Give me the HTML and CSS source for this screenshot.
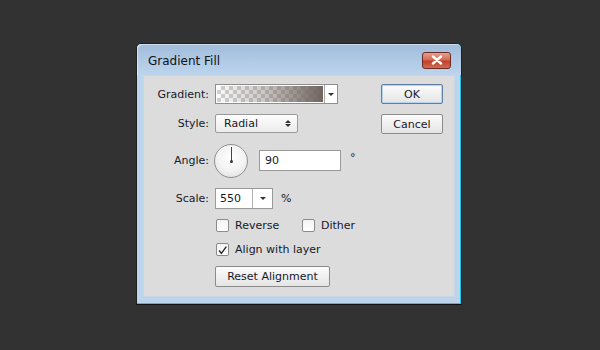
FILE: index.html
```html
<!DOCTYPE html>
<html>
<head>
<meta charset="utf-8">
<link rel="stylesheet" href="styles.css">
</head>
<body>
<div class="dialog">
  <div class="titlebar">
    <span class="title">Gradient Fill</span>
    <span class="close">
      <svg width="14" height="10" viewBox="0 0 14 10"><path d="M3 1.5 L11 8.5 M11 1.5 L3 8.5" stroke="#fff" stroke-width="2.4" stroke-linecap="round"/></svg>
    </span>
  </div>
  <div class="content">
    <div class="form">
      <div class="label r1">Gradient:</div>
      <div class="ctrl r1">
        <div class="grad"><div class="swatch"></div><div class="dd"><span class="tri"></span></div></div>
      </div>
      <div class="label r2">Style:</div>
      <div class="ctrl r2">
        <div class="select"><span>Radial</span><span class="updown"><span class="up"></span><span class="down"></span></span></div>
      </div>
      <div class="label r3">Angle:</div>
      <div class="ctrl r3">
        <div class="dial"><span class="hand"></span><span class="dot"></span></div>
        <div class="input angle">90</div>
        <span class="unit deg">°</span>
      </div>
      <div class="label r4">Scale:</div>
      <div class="ctrl r4">
        <div class="combo"><span class="val">550</span><span class="dd"><span class="tri"></span></span></div>
        <span class="unit">%</span>
      </div>
      <div class="ctrl r5">
        <label class="check rev"><span class="box"></span>Reverse</label>
        <label class="check"><span class="box"></span>Dither</label>
      </div>
      <div class="ctrl r6">
        <label class="check"><span class="box"><svg width="13" height="13" viewBox="0 0 13 13"><path d="M2.5 6.5 L5.2 10 L11 2" fill="none" stroke="#222" stroke-width="1.6"/></svg></span>Align with layer</label>
      </div>
      <div class="ctrl r7">
        <div class="btn reset">Reset Alignment</div>
      </div>
    </div>
    <div class="buttons">
      <div class="btn ok">OK</div>
      <div class="btn">Cancel</div>
    </div>
  </div>
</div>
</body>
</html>
```

FILE: styles.css
```css
html, body {
  margin: 0;
  padding: 0;
  background: #323232;
  width: 600px;
  height: 350px;
  overflow: hidden;
}
body {
  padding: 43px 0 0 136px;
  box-sizing: border-box;
  font-family: Tahoma, "DejaVu Sans", sans-serif;
  font-size: 11px;
  color: #16182a;
}
.dialog {
  width: 326px;
  height: 262px;
  box-sizing: border-box;
  border: 1px solid #202020;
  border-bottom-color: #111;
  background: #bcd4ec;
  border-radius: 5px 5px 0 0;
  display: flex;
  flex-direction: column;
  padding: 0 6px 7px 6px;
  box-shadow: inset 0 -1px 0 #23c8ec, inset -1px 0 0 #23c8ec;
}
.titlebar {
  height: 31px;
  margin: 0 -6px;
  padding: 0 9px 0 11px;
  display: flex;
  align-items: center;
  justify-content: space-between;
  background: linear-gradient(#a0bcda, #b2cbe7 60%, #bcd4ec);
  border-radius: 5px 5px 0 0;
  box-shadow: inset 1px 1px 0 rgba(255,255,255,0.5);
}
.title {
  font-size: 12px;
  color: #111;
  padding-top: 2px;
}
.close {
  width: 27px;
  height: 15px;
  border: 1px solid #6b2a22;
  border-radius: 3px;
  background: linear-gradient(#e6a08f, #d66b55 45%, #c2402c 55%, #cf6d55);
  display: flex;
  align-items: center;
  justify-content: center;
  margin-top: 1px;
  margin-right: 1px;
}
.content {
  flex: 1;
  background: #dcdcdc;
  border: 1px solid #c8d6e6;
  display: flex;
  justify-content: space-between;
  padding: 8px 11px 0 0;
}
.form {
  display: grid;
  grid-template-columns: 65px auto;
  grid-template-rows: 20px 19px 35px 20px 14px 14px 21px;
  row-gap: 10px;
  column-gap: 6px;
  align-items: center;
  align-content: start;
}
.r5, .r6 { margin-top: 1px; }
.label {
  text-align: right;
}
.ctrl {
  display: flex;
  align-items: center;
  grid-column: 2;
}
.grad {
  display: flex;
  width: 123px;
  height: 20px;
  box-sizing: border-box;
  border: 1px solid #8e8e8e;
  background: #fff;
}
.swatch {
  flex: 1;
  margin: 1px;
  background:
    linear-gradient(to right, rgba(112,100,94,0) 0%, rgba(112,100,94,0.35) 45%, rgba(112,100,94,1) 100%),
    repeating-conic-gradient(#d0d0d0 0 25%, #fbfbfb 0 50%) 0 0 / 8px 8px;
}
.dd {
  width: 12px;
  border-left: 1px solid #a9a9a9;
  display: flex;
  align-items: center;
  justify-content: center;
  background: #fff;
}
.tri {
  width: 0;
  height: 0;
  border-left: 3px solid transparent;
  border-right: 3px solid transparent;
  border-top: 3px solid #333;
}
.select {
  width: 83px;
  height: 19px;
  box-sizing: border-box;
  border: 1px solid #9a9a9a;
  border-radius: 2px;
  background: linear-gradient(#fdfdfd, #ececec);
  display: flex;
  align-items: center;
  justify-content: space-between;
  padding: 0 6px 0 8px;
}
.updown {
  display: flex;
  flex-direction: column;
  gap: 1px;
}
.up, .down {
  width: 0; height: 0;
  border-left: 3px solid transparent;
  border-right: 3px solid transparent;
}
.up { border-bottom: 3px solid #333; }
.down { border-top: 3px solid #333; }
.dial {
  width: 34px;
  height: 34px;
  box-sizing: border-box;
  border-radius: 50%;
  border: 1px solid #8f8f8f;
  background: radial-gradient(circle at 50% 40%, #ffffff 0%, #f2f2f2 55%, #d6d6d6 100%);
  position: relative;
  margin-left: -1px;
}
.hand {
  position: absolute;
  left: 16px;
  top: 2px;
  width: 1px;
  height: 14px;
  background: #444;
}
.dot {
  position: absolute;
  left: 15px;
  top: 15px;
  width: 3px;
  height: 3px;
  border-radius: 50%;
  background: #333;
}
.input {
  height: 21px;
  box-sizing: border-box;
  border: 1px solid #9a9a9a;
  background: #fff;
  padding: 0 5px;
  display: flex;
  align-items: center;
}
.angle {
  width: 82px;
  margin-left: 11px;
}
.unit {
  margin-left: 8px;
}
.deg {
  margin-left: 9px;
  align-self: flex-start;
  margin-top: 7px;
}
.combo {
  width: 58px;
  height: 21px;
  box-sizing: border-box;
  border: 1px solid #9a9a9a;
  background: #fff;
  display: flex;
}
.combo .val {
  flex: 1;
  padding-left: 4px;
  display: flex;
  align-items: center;
}
.combo .dd {
  width: 19px;
  background: #fff;
  border-left: 1px solid #b0b0b0;
}
.check {
  display: flex;
  align-items: center;
  gap: 6px;
}
.rev { width: 86px; }
.box {
  width: 13px;
  height: 13px;
  box-sizing: border-box;
  border: 1px solid #8b8b8b;
  border-radius: 2px;
  background: linear-gradient(#f3f3f3, #ffffff);
  display: flex;
  margin-left: 1px;
}
.btn {
  height: 20px;
  box-sizing: border-box;
  border: 1px solid #8c8c8c;
  border-radius: 2px;
  background: linear-gradient(#fcfcfc, #f0f0f0 50%, #e4e4e4);
  display: flex;
  align-items: center;
  justify-content: center;
}
.reset {
  width: 115px;
  height: 21px;
}
.buttons {
  display: flex;
  flex-direction: column;
  gap: 10px;
}
.buttons .btn {
  width: 62px;
}
.ok {
  border-color: #5f7ea5;
  box-shadow: inset 0 0 0 1px #b7d3ee;
}
```
